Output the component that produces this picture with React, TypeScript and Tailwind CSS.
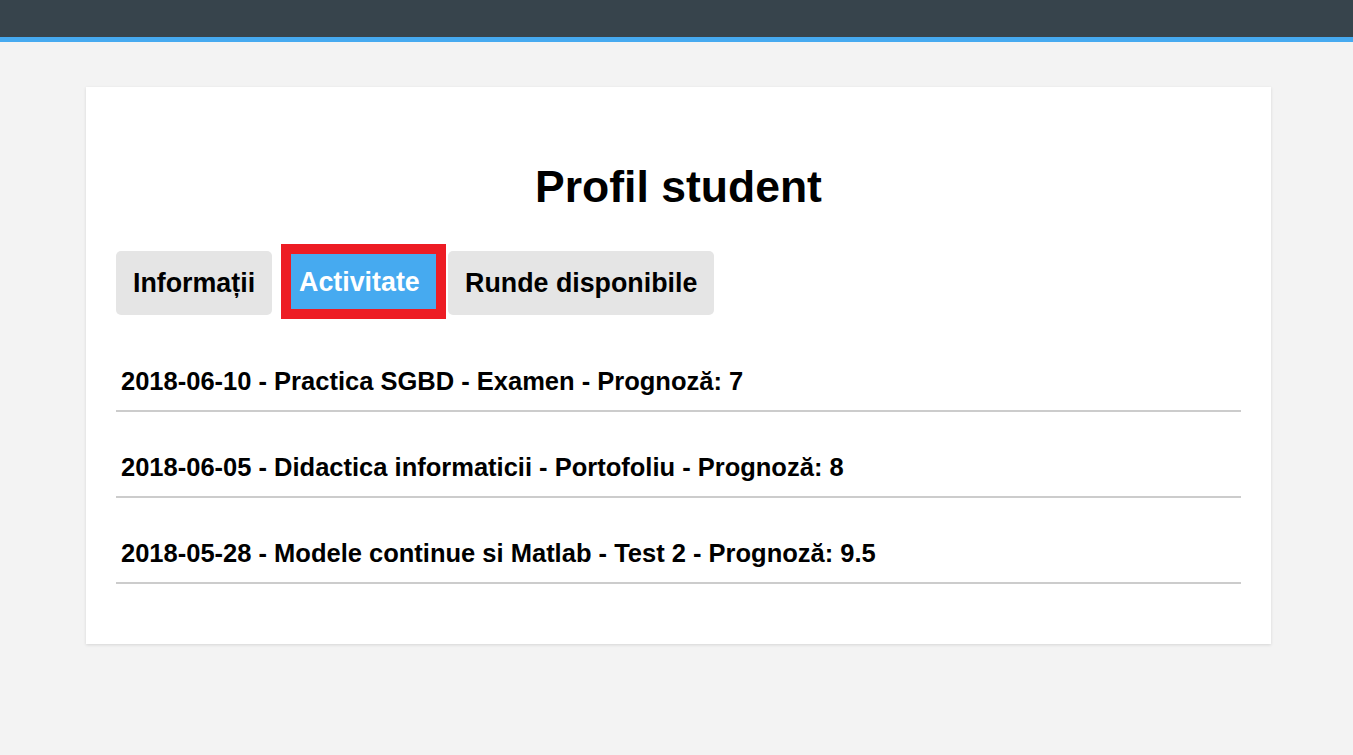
import React from 'react'

const activities = [
  '2018-06-10 - Practica SGBD - Examen - Prognoză: 7',
  '2018-06-05 - Didactica informaticii - Portofoliu - Prognoză: 8',
  '2018-05-28 - Modele continue si Matlab - Test 2 - Prognoză: 9.5',
]

const App = () => {
  return (
    <div className="min-h-[755px] bg-[#f3f3f3] font-['Liberation_Sans',Arial,sans-serif] text-black">
      <header className="h-[42px] bg-[#37444c] border-b-[5px] border-[#46aaf0]" />

      <main className="pt-[45px]">
        <div className="ml-[86px] w-[1185px] bg-white px-[30px] pt-[75px] pb-[60px] shadow-[0_1px_3px_rgba(0,0,0,0.12)]">
          <h1 className="text-center text-[44.5px] font-bold leading-[50px]">Profil student</h1>

          <div className="mt-[32px] flex items-start">
            <button className="mt-[7px] h-[64px] rounded-[5px] bg-[#e5e5e5] px-[17px] text-[26.8px] font-bold">
              Informații
            </button>
            <div className="ml-[9px] border-[10px] border-[#ed1c24]">
              <button className="flex h-[55px] w-[145px] items-center bg-[#46aaf0] pl-[8px] pt-[2px] text-[26.8px] font-bold text-white">
                Activitate
              </button>
            </div>
            <button className="ml-[2px] mt-[7px] h-[64px] rounded-[5px] bg-[#e5e5e5] px-[17px] text-[26.8px] font-bold">
              Runde disponibile
            </button>
          </div>

          <ul className="mt-[7px]">
            {activities.map((a) => (
              <li
                key={a}
                className="border-b-2 border-[#cccccc] pl-[5px] pt-[40px] pb-[14px] text-[25.5px] font-bold leading-[30px]"
              >
                {a}
              </li>
            ))}
          </ul>
        </div>
      </main>
    </div>
  )
}

export default App
